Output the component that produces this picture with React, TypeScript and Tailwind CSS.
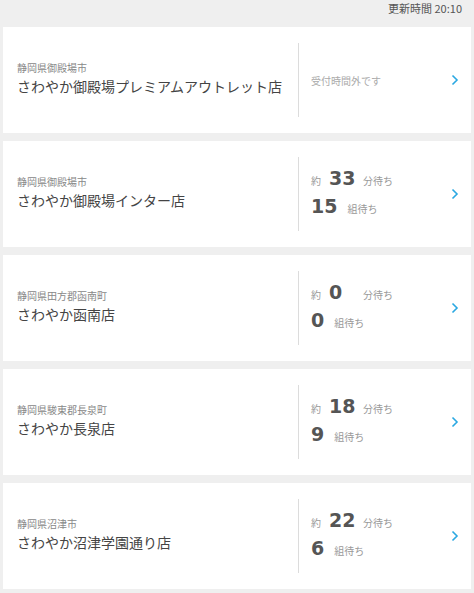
import React from "react";

type Shop = {
  area: string;
  name: string;
  minutes?: number;
  groups?: number;
};

const SHOPS: Shop[] = [
  { area: "静岡県御殿場市", name: "さわやか御殿場プレミアムアウトレット店" },
  { area: "静岡県御殿場市", name: "さわやか御殿場インター店", minutes: 33, groups: 15 },
  { area: "静岡県田方郡函南町", name: "さわやか函南店", minutes: 0, groups: 0 },
  { area: "静岡県駿東郡長泉町", name: "さわやか長泉店", minutes: 18, groups: 9 },
  { area: "静岡県沼津市", name: "さわやか沼津学園通り店", minutes: 22, groups: 6 },
];

const jp = "font-['Noto_Sans_CJK_JP',sans-serif]";
const num = "font-['DejaVu_Sans','Noto_Sans_CJK_JP',sans-serif]";

function Chevron() {
  return (
    <svg width="8" height="12" viewBox="0 0 8 12" className="shrink-0">
      <path d="M1.5 1.5 L6 6 L1.5 10.5" fill="none" stroke="#2aa8e2" strokeWidth="1.6" />
    </svg>
  );
}

function ShopCard({ shop }: { shop: Shop }) {
  const open = shop.minutes !== undefined;
  return (
    <div className="flex h-[106px] bg-white">
      {/* name block */}
      <div className="flex w-[295px] flex-col justify-center pb-[4px] pl-[14px]">
        <p className={`${jp} text-[10px] leading-[14px] text-[#888]`}>{shop.area}</p>
        <p className={`${jp} mt-[1px] text-[14px] leading-[20px] text-[#444]`}>{shop.name}</p>
      </div>
      <div className="my-4 w-px bg-[#dcdcdc]" />
      {/* wait block */}
      <div className="flex flex-1 items-center pl-3 pr-[12px]">
        <div className="flex-1">
          {open ? (
            <div className="flex flex-col gap-[6px] pb-[4px]">
              <div className="flex items-baseline">
                <span className={`${jp} text-[10px] text-[#999]`}>約</span>
                <span className={`${num} ml-[8px] w-[26px] text-[19px] leading-[22px] font-bold text-[#555]`}>
                  {shop.minutes}
                </span>
                <span className={`${jp} ml-[8px] text-[10px] text-[#999]`}>分待ち</span>
              </div>
              <div className="flex items-baseline">
                <span className={`${num} text-[19px] leading-[22px] font-bold text-[#555]`}>{shop.groups}</span>
                <span className={`${jp} ml-[10px] text-[10px] text-[#999]`}>組待ち</span>
              </div>
            </div>
          ) : (
            <p className={`${jp} text-[10px] text-[#aaa]`}>受付時間外です</p>
          )}
        </div>
        <Chevron />
      </div>
    </div>
  );
}

export default function App() {
  return (
    <div className="min-h-[593px] bg-[#efefef] px-[3px]">
      <div className={`${jp} flex h-[27px] justify-end pr-[9px] pt-[1px] text-[11px] leading-[14px] text-[#555]`}>
        更新時間 20:10
      </div>
      <div className="flex flex-col gap-2">
        {SHOPS.map((s) => (
          <ShopCard key={s.name} shop={s} />
        ))}
      </div>
    </div>
  );
}
